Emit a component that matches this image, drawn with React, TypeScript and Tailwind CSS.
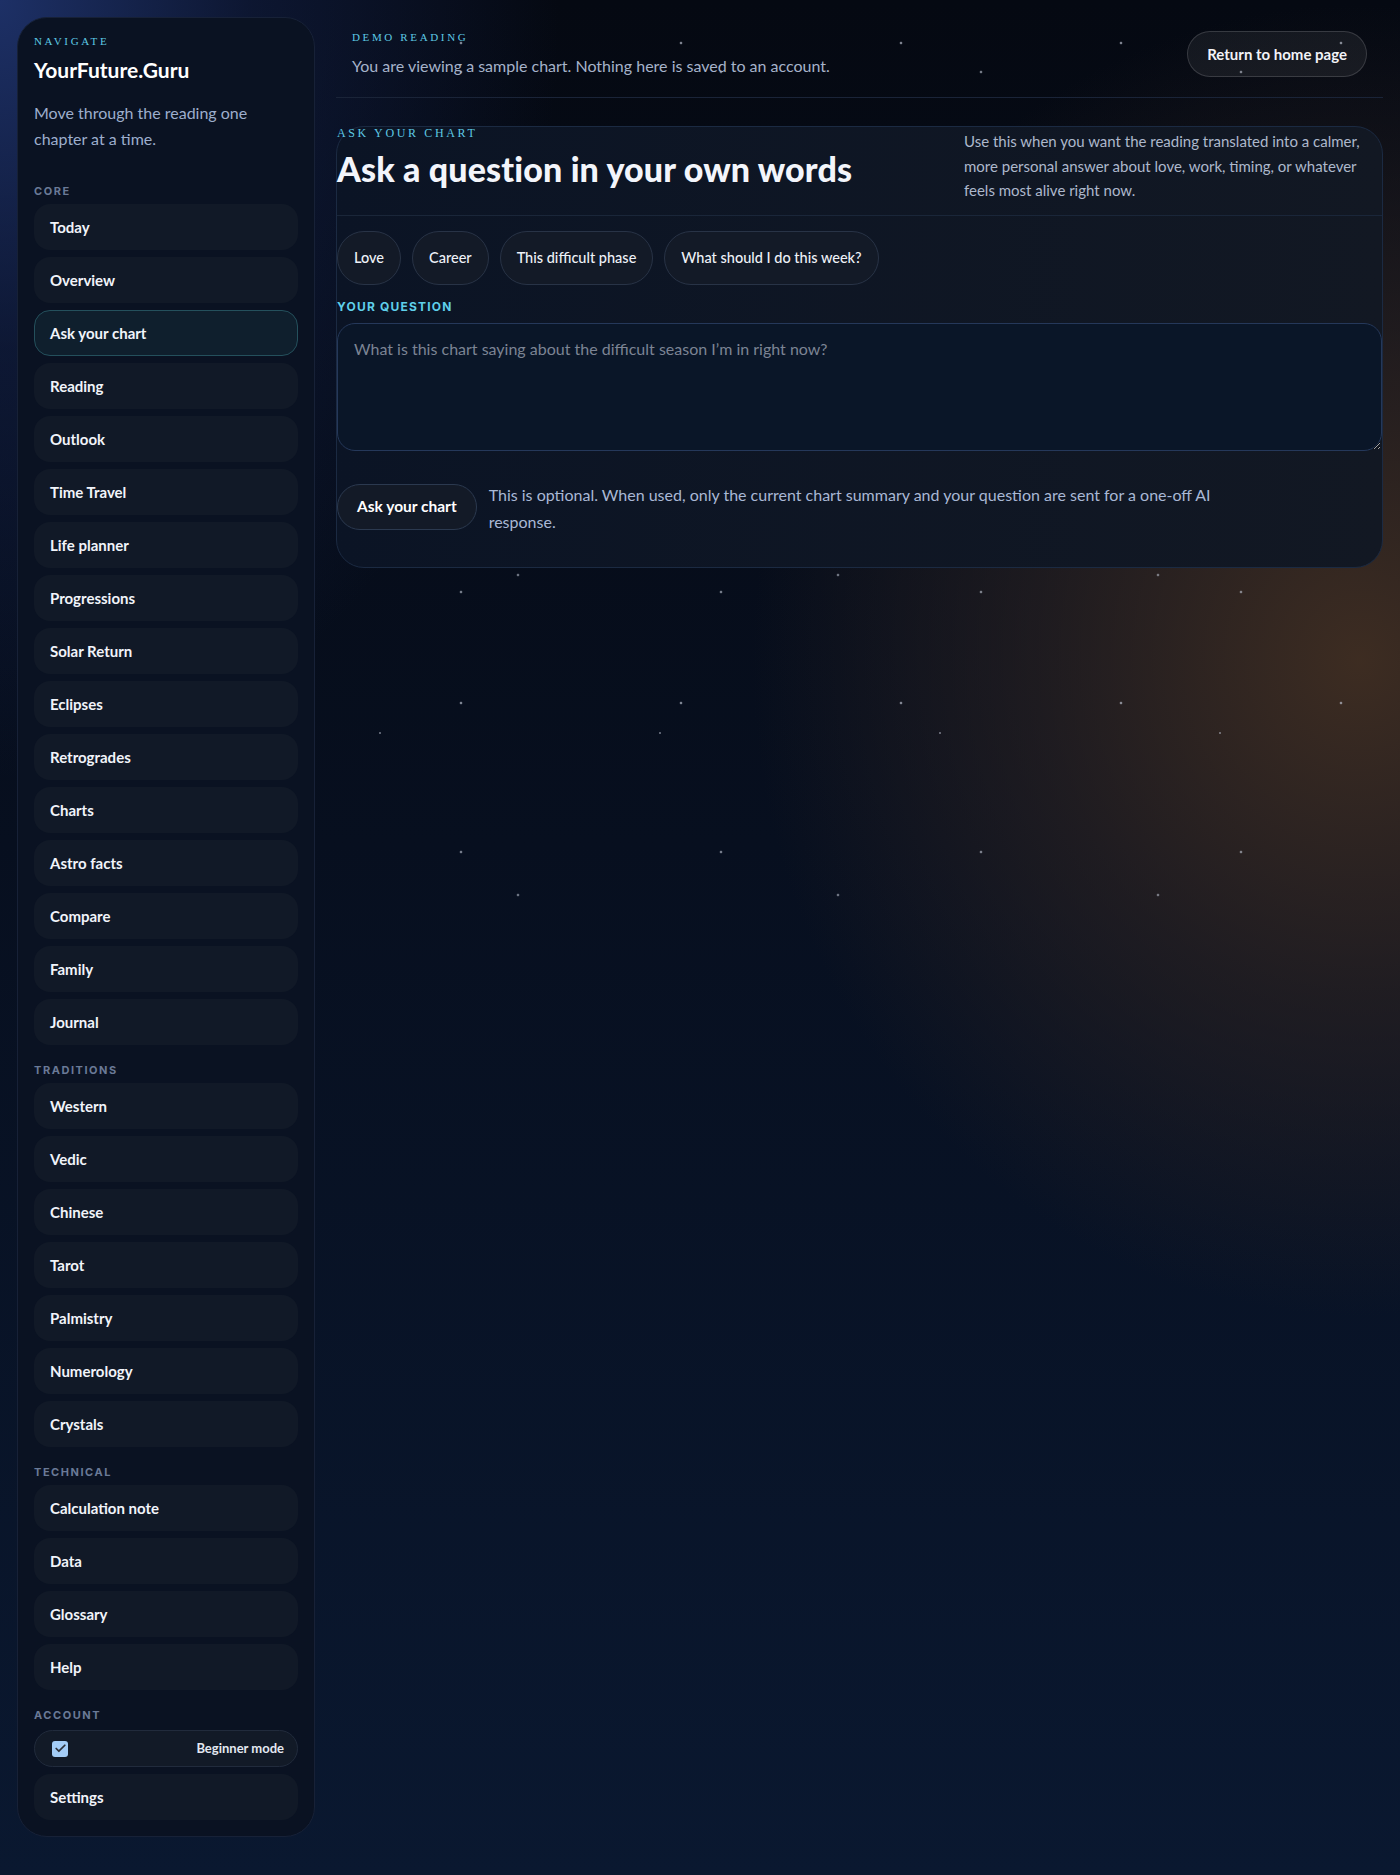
import { Check } from "lucide-react";

// Reading shell: chapter sidebar on the left, "Ask your chart" panel on the right

const CORE = [
  "Today",
  "Overview",
  "Ask your chart",
  "Reading",
  "Outlook",
  "Time Travel",
  "Life planner",
  "Progressions",
  "Solar Return",
  "Eclipses",
  "Retrogrades",
  "Charts",
  "Astro facts",
  "Compare",
  "Family",
  "Journal",
];
const TRADITIONS = ["Western", "Vedic", "Chinese", "Tarot", "Palmistry", "Numerology", "Crystals"];
const TECHNICAL = ["Calculation note", "Data", "Glossary", "Help"];
const PROMPTS = ["Love", "Career", "This difficult phase", "What should I do this week?"];

const ACTIVE = "Ask your chart";

function GroupLabel({ children }: { children: string }) {
  return (
    <div className="mb-[6px] font-['Inter',sans-serif] text-[11px] leading-[14px] font-bold uppercase tracking-[0.14em] text-[#6a7a97]">
      {children}
    </div>
  );
}

function NavItem({ label }: { label: string }) {
  const active = label === ACTIVE;
  return (
    <button
      className={
        "flex h-[46px] w-full items-center rounded-[16px] border px-[15px] text-left text-[15px] font-bold text-[#f1f4fa] " +
        (active ? "border-[#24505c] bg-[#0f1f2d]" : "border-transparent bg-[#111927]")
      }
    >
      {label}
    </button>
  );
}

function NavGroup({ title, items }: { title: string; items: string[] }) {
  return (
    <section>
      <GroupLabel>{title}</GroupLabel>
      <div className="flex flex-col gap-[7px]">
        {items.map((i) => (
          <NavItem key={i} label={i} />
        ))}
      </div>
    </section>
  );
}

function Sidebar() {
  return (
    <aside className="w-[298px] shrink-0 rounded-[30px] border border-[#172137] bg-[#0a1222] px-4 pt-4 pb-[16px]">
      <div className="font-['Liberation_Serif',serif] text-[11px] leading-[14px] uppercase tracking-[0.24em] text-[#5ec9e4]">
        Navigate
      </div>
      <h1 className="mt-2 text-[21px] leading-[28px] font-bold text-white">YourFuture.Guru</h1>
      <p className="mt-4 text-[16px] leading-[26px] text-[#9daecd]">
        Move through the reading one chapter at a time.
      </p>

      <div className="mt-[32px] flex flex-col gap-[18px]">
        <NavGroup title="Core" items={CORE} />
        <NavGroup title="Traditions" items={TRADITIONS} />
        <NavGroup title="Technical" items={TECHNICAL} />

        <section>
          <GroupLabel>Account</GroupLabel>
          <div className="flex flex-col gap-[7px]">
            <label className="mt-[2px] flex h-[37px] items-center justify-between rounded-full border border-[#212b3c] bg-[#121a27] pr-[13px] pl-[17px]">
              <span className="flex h-4 w-4 items-center justify-center rounded-[3px] bg-[#a3ccf6]">
                <Check size={13} strokeWidth={3.2} className="text-[#2c3038]" />
              </span>
              <span className="text-[13px] font-bold text-[#e3e8f1]">Beginner mode</span>
            </label>
            <NavItem label="Settings" />
          </div>
        </section>
      </div>
    </aside>
  );
}

function AskPanel() {
  return (
    <section className="mt-[28px] rounded-[28px] border border-[#1b2a42] bg-linear-to-r from-[#0b1425] to-[#121823] pb-8">
      <div className="flex items-start justify-between border-b border-[#1a2639] pb-[12px]">
        <div className="pb-[11px]">
          <div className="font-['Liberation_Serif',serif] text-[12px] leading-[13px] uppercase tracking-[0.22em] text-[#5ec9e4]">
            Ask your chart
          </div>
          <h2 className="mt-[9px] text-[34px] leading-[40px] font-black tracking-[0.004em] text-[#f3f5fb]">
            Ask a question in your own words
          </h2>
        </div>
        <p className="mt-[2px] mr-[10px] w-[408px] text-[15px] leading-[24.5px] text-[#adb8cc]">
          Use this when you want the reading translated into a calmer, more personal answer about love, work,
          timing, or whatever feels most alive right now.
        </p>
      </div>

      <div className="mt-[15px] flex gap-[11px]">
        {PROMPTS.map((p) => (
          <button
            key={p}
            className="h-[54px] rounded-full border border-[#283346] bg-[#131a27] px-4 text-[14.5px] font-medium text-[#eef1f7]"
          >
            {p}
          </button>
        ))}
      </div>

      <div className="mt-[15px] font-['Inter',sans-serif] text-[12px] leading-[14px] font-bold uppercase tracking-[0.1em] text-[#5fcfea]">
        Your question
      </div>
      <textarea
        className="mt-[9px] block h-[128px] w-full resize-y rounded-[18px] border border-[#25385a] bg-[#0a1628] px-4 pt-[13px] text-[16px] leading-[24px] text-white outline-none placeholder:text-[#7c8494]"
        placeholder="What is this chart saying about the difficult season I’m in right now?"
      />

      <div className="mt-[33px] flex items-start gap-3">
        <button className="h-[46px] shrink-0 rounded-full border border-[#2b394f] bg-[#131a27] px-[19px] text-[15.5px] font-bold text-white">
          Ask your chart
        </button>
        <p className="-mt-[3px] max-w-[760px] text-[16px] leading-[27px] text-[#a9b8d5]">
          This is optional. When used, only the current chart summary and your question are sent for a one-off AI
          response.
        </p>
      </div>
    </section>
  );
}

export default function App() {
  return (
    <div className="relative min-h-screen overflow-hidden bg-[radial-gradient(ellipse_560px_780px_at_0px_0px,#1d3066_0%,rgba(22,38,86,0.45)_45%,transparent_100%),radial-gradient(ellipse_760px_820px_at_1360px_660px,rgba(64,46,34,0.95)_0%,rgba(46,36,34,0.6)_42%,transparent_80%),linear-gradient(180deg,#050912_0%,#070f1f_45%,#0a1830_100%)] font-['Lato',sans-serif]">
      {/* faint star field, four offset dot grids */}
      <div className="pointer-events-none absolute inset-x-0 top-0 h-[912px] [background-image:radial-gradient(circle_at_21px_43px,rgba(190,196,210,0.65)_0,rgba(190,196,210,0.65)_1px,transparent_1.7px),radial-gradient(circle_at_201px_72px,rgba(190,196,210,0.6)_0,rgba(190,196,210,0.6)_1px,transparent_1.7px),radial-gradient(circle_at_198px_255px,rgba(190,196,210,0.55)_0,rgba(190,196,210,0.55)_1px,transparent_1.7px),radial-gradient(circle_at_100px_173px,rgba(190,196,210,0.45)_0,rgba(190,196,210,0.45)_0.8px,transparent_1.5px)] [background-size:220px_220px,260px_260px,320px_320px,280px_280px]" />

      <div className="relative flex gap-[21px] p-[17px]">
        <Sidebar />

        <main className="min-w-0 flex-1">
          <header className="flex items-center justify-between border-b border-[#1a2438] px-4 pt-[13px] pb-[19px]">
            <div>
              <div className="font-['Liberation_Serif',serif] text-[11px] leading-[14px] uppercase tracking-[0.24em] text-[#5ec9e4]">
                Demo reading
              </div>
              <p className="mt-[10px] text-[16px] leading-[24px] text-[#a6b3ca]">
                You are viewing a sample chart. Nothing here is saved to an account.
              </p>
            </div>
            <button className="h-[46px] rounded-full border border-white/15 bg-white/[0.06] px-[19px] text-[15px] font-bold text-[#f2f3f7]">
              Return to home page
            </button>
          </header>

          <AskPanel />
        </main>
      </div>
    </div>
  );
}
